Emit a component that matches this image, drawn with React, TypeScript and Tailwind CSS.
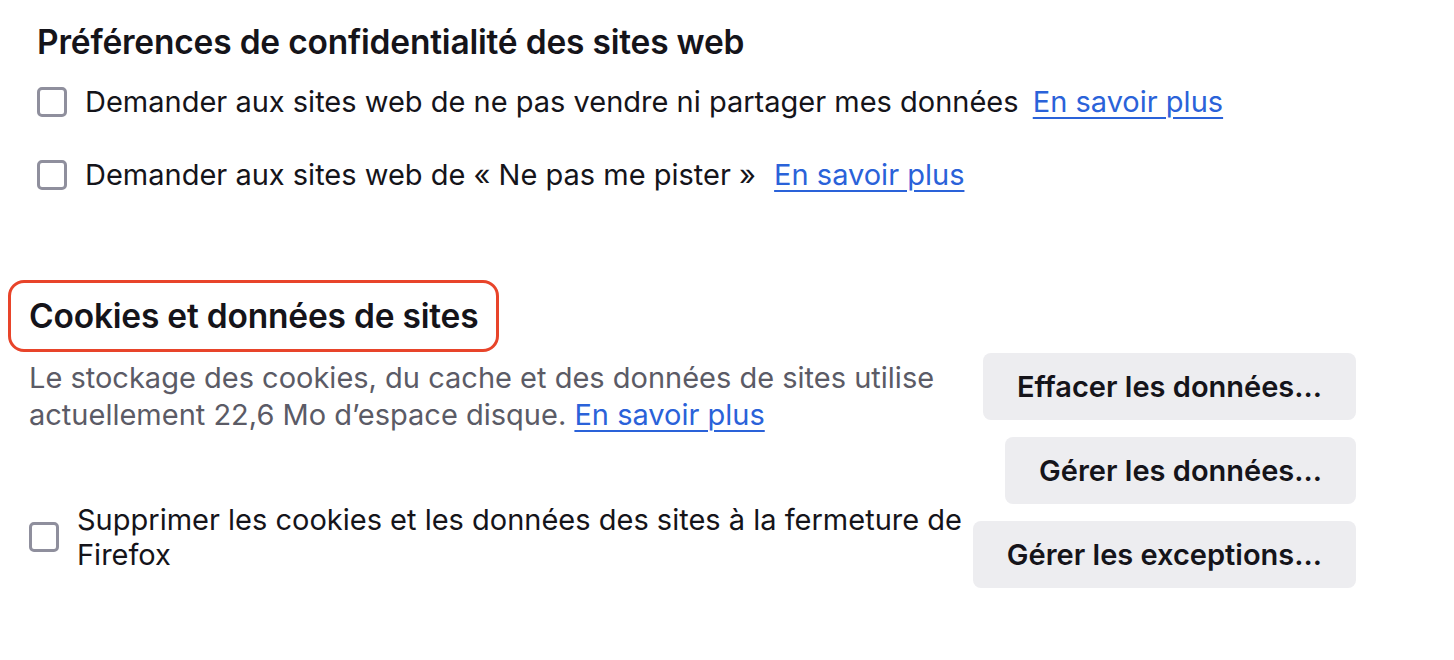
import React from "react"

const Checkbox = () => (
  <span className="block h-[30px] w-[30px] shrink-0 rounded-[5px] border-[3px] border-[#8f8f9d] bg-white" />
)

const Link = ({ children }: { children: React.ReactNode }) => (
  <a href="#" className="text-[#2a62d9] underline decoration-[2px] underline-offset-[5px]">
    {children}
  </a>
)

const BUTTONS = ["Effacer les données...", "Gérer les données...", "Gérer les exceptions..."]

export default function App() {
  return (
    <div className="h-[660px] w-[1454px] overflow-hidden bg-white font-['Inter',sans-serif] text-[#15141a]">
      {/* Privacy preferences */}
      <section className="pl-[37px] pt-[22px]">
        <h2 className="text-[33.5px] font-semibold leading-[40px] tracking-[-0.2px]">
          Préférences de confidentialité des sites web
        </h2>
        <div className="mt-[25px] flex flex-col gap-[43px] text-[29px] leading-[30px]">
          <label className="flex items-center gap-[18px]">
            <Checkbox />
            <span>
              Demander aux sites web de ne pas vendre ni partager mes données <span className="ml-[6px]"><Link>En savoir plus</Link></span>
            </span>
          </label>
          <label className="flex items-center gap-[18px]">
            <Checkbox />
            <span>
              Demander aux sites web de « Ne pas me pister » <span className="ml-[10px]"><Link>En savoir plus</Link></span>
            </span>
          </label>
        </div>
      </section>

      {/* Cookies */}
      <section className="mt-[90px] pl-[8px] pr-[98px]">
        <div className="inline-block rounded-[16px] border-[3px] border-[#e8442a] px-[18px] py-[13px]">
          <h2 className="text-[33.5px] font-semibold leading-[40px] tracking-[-0.2px]">
            Cookies et données de sites
          </h2>
        </div>
        <div className="flex justify-between">
          <div className="pl-[21px] pt-[7px]">
            <p className="w-[940px] text-[29px] leading-[37px] text-[#5b5b66]">
              Le stockage des cookies, du cache et des données de sites utilise actuellement 22,6 Mo d’espace disque. <Link>En savoir plus</Link>
            </p>
            <label className="mt-[69px] flex items-center gap-[18px]">
              <Checkbox />
              <span className="w-[895px] text-[29px] leading-[35px]">
                Supprimer les cookies et les données des sites à la fermeture de Firefox
              </span>
            </label>
          </div>
          <div className="flex flex-col items-end gap-[17px] pt-[1px]">
            {BUTTONS.map((b) => (
              <button
                key={b}
                className="h-[67px] rounded-[8px] bg-[#ededf0] px-[34px] text-[29px] font-semibold text-[#15141a]"
              >
                {b}
              </button>
            ))}
          </div>
        </div>
      </section>
    </div>
  )
}
